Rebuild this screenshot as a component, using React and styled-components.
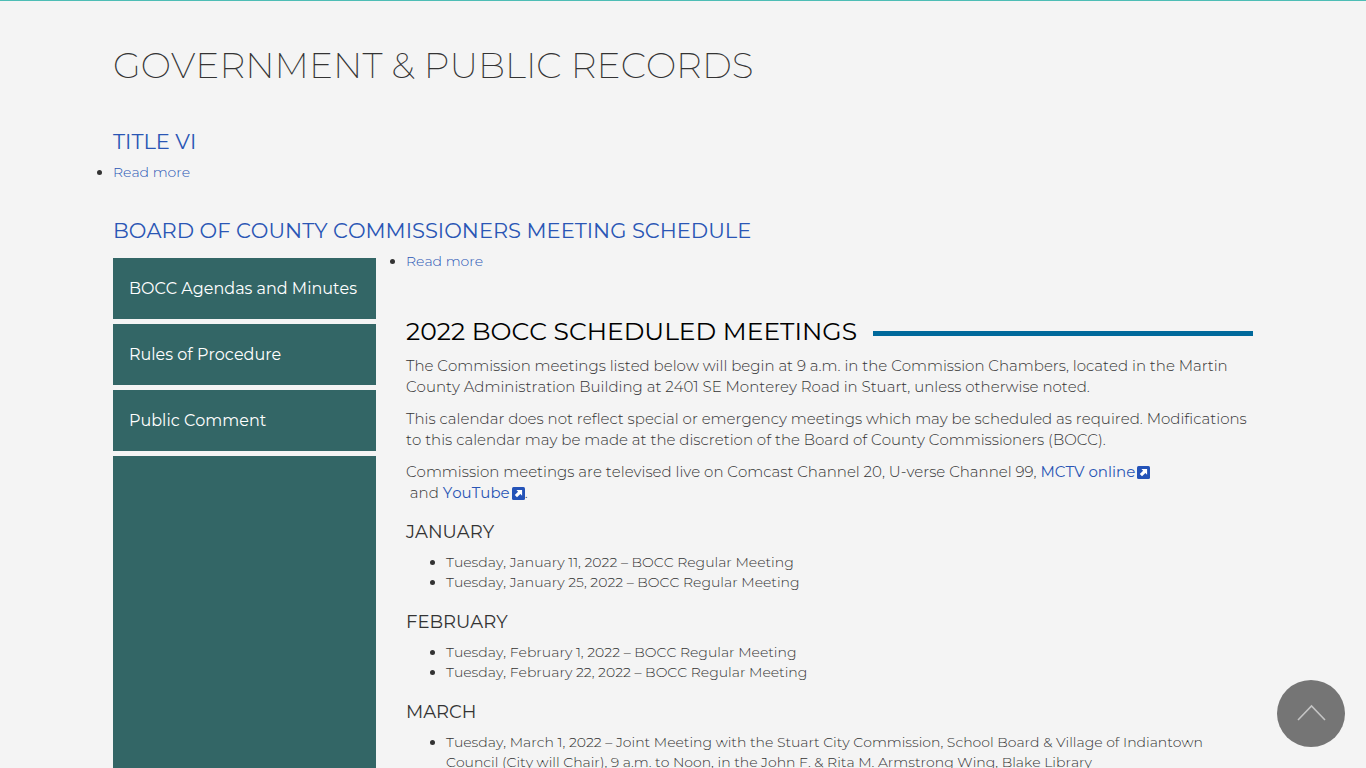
import React from 'react';
import styled, { createGlobalStyle, ThemeProvider } from 'styled-components';

const theme = {
  color: {
    page: '#f4f4f4',
    text: '#333',
    link: '#2a56b5',
    teal: '#336666',
    accent: '#4dbdb5',
    rule: '#00699b',
  },
  font: {
    family: 'Montserrat, Inter, "Open Sans", sans-serif',
  },
};

const GlobalStyle = createGlobalStyle`
  * {
    box-sizing: border-box;
  }

  body {
    margin: 0;
    background: ${theme.color.page};
    color: ${theme.color.text};
    font-family: ${theme.font.family};
    font-size: 14px;
    font-weight: 300;
    font-kerning: none;
    line-height: 20px;
  }
`;

const Page = styled.main`
  border-top: 1px solid ${({ theme }) => theme.color.accent};
`;

const Container = styled.div`
  max-width: 1170px;
  margin: 0 auto;
  padding: 44px 15px 40px;
`;

const PageTitle = styled.h1`
  margin: 0 0 45px;
  font-size: 36px;
  font-weight: 200;
  line-height: 40px;
  text-transform: uppercase;
`;

const SectionTitle = styled.h2`
  margin: 0 0 8px;
  font-size: 21px;
  font-weight: 400;
  line-height: 24px;
  text-transform: uppercase;
`;

const Anchor = styled.a`
  color: ${({ theme }) => theme.color.link};
  font-weight: ${({ $strong }) => ($strong ? 400 : 'inherit')};
  text-decoration: none;
`;

const LinkList = styled.ul`
  margin: 0 0 ${({ $gap }) => $gap}px;
  padding: 0;
`;

const Columns = styled.div`
  display: grid;
  grid-template-columns: minmax(0, 263fr) minmax(0, 847fr);
  column-gap: 30px;
`;

const SideMenu = styled.ul`
  display: flex;
  flex-direction: column;
  gap: 5px;
  margin: 7px 0 0;
  padding: 0;
  list-style: none;
`;

const SideItem = styled.li`
  flex-grow: ${({ $fill }) => ($fill ? 1 : 0)};
  background: ${({ theme }) => theme.color.teal};
`;

const SideLink = styled.a`
  display: block;
  padding: 16px;
  color: #fff;
  font-size: 16px;
  font-weight: 400;
  line-height: 29px;
  text-decoration: none;
`;

const BandTitle = styled.h2`
  display: flex;
  align-items: center;
  gap: 16px;
  margin: 0 0 10px;
  color: #000;
  font-size: 25px;
  font-weight: 400;
  line-height: 28px;
  text-transform: uppercase;

  &::after {
    content: '';
    flex: 1;
    height: 5px;
    margin-top: 4px;
    background: ${({ theme }) => theme.color.rule};
  }
`;

const Paragraph = styled.p`
  margin: 0 0 11px;
  font-size: 15px;
  line-height: 21px;
`;

const MonthTitle = styled.h3`
  margin: 19px 0 10px;
  font-size: 18px;
  font-weight: 400;
  line-height: 20px;
  text-transform: uppercase;
`;

const MeetingList = styled.ul`
  margin: 0 0 20px;
  padding: 0 0 0 40px;
`;

const ExternalSvg = styled.svg`
  width: 13px;
  height: 13px;
  margin-left: 2px;
  vertical-align: -2px;
`;

const TopButton = styled.button`
  position: fixed;
  right: 21px;
  bottom: 21px;
  width: 68px;
  height: 67px;
  padding: 0;
  border: 0;
  border-radius: 50%;
  background: #757575;
  cursor: pointer;

  svg {
    display: block;
    width: 100%;
    height: 100%;
  }
`;

const MENU = ['BOCC Agendas and Minutes', 'Rules of Procedure', 'Public Comment'];

const MONTHS = [
  {
    name: 'January',
    meetings: [
      'Tuesday, January 11, 2022 – BOCC Regular Meeting',
      'Tuesday, January 25, 2022 – BOCC Regular Meeting',
    ],
  },
  {
    name: 'February',
    meetings: [
      'Tuesday, February 1, 2022 – BOCC Regular Meeting',
      'Tuesday, February 22, 2022 – BOCC Regular Meeting',
    ],
  },
  {
    name: 'March',
    meetings: [
      'Tuesday, March 1, 2022 – Joint Meeting with the Stuart City Commission, School Board & Village of Indiantown Council (City will Chair), 9 a.m. to Noon, in the John F. & Rita M. Armstrong Wing, Blake Library',
    ],
  },
];

const ExternalIcon = () => (
  <ExternalSvg viewBox="0 0 13 13" aria-hidden="true">
    <rect width="13" height="13" rx="1.5" fill="#2453b8" />
    <path
      d="M4.4 3h5.7v5.7L8.4 7 5 10.3 2.8 8.1 6.1 4.7z"
      fill="#fff"
    />
  </ExternalSvg>
);

const ExternalLink = ({ href, children }) => (
  <Anchor href={href} $strong>
    {children}
    <ExternalIcon />
  </Anchor>
);

const ReadMore = ({ href, gap }) => (
  <LinkList $gap={gap}>
    <li>
      <Anchor href={href}>Read more</Anchor>
    </li>
  </LinkList>
);

const Month = ({ name, meetings }) => (
  <section>
    <MonthTitle>{name}</MonthTitle>
    <MeetingList>
      {meetings.map(meeting => (
        <li key={meeting}>{meeting}</li>
      ))}
    </MeetingList>
  </section>
);

const App = () => (
  <ThemeProvider theme={theme}>
    <GlobalStyle />
    <Page>
      <Container>
        <PageTitle>Government &amp; Public Records</PageTitle>
        <SectionTitle>
          <Anchor href="#title-vi">Title VI</Anchor>
        </SectionTitle>
        <ReadMore href="#title-vi" gap={37} />
        <SectionTitle>
          <Anchor href="#schedule">
            Board of County Commissioners Meeting Schedule
          </Anchor>
        </SectionTitle>
        <Columns>
          <SideMenu>
            {MENU.map(label => (
              <SideItem key={label}>
                <SideLink href="#menu">{label}</SideLink>
              </SideItem>
            ))}
            <SideItem $fill />
          </SideMenu>
          <div>
            <ReadMore href="#schedule" gap={46} />
            <BandTitle>2022 BOCC Scheduled Meetings</BandTitle>
            <Paragraph>
              The Commission meetings listed below will begin at 9 a.m. in the
              Commission Chambers, located in the Martin County Administration
              Building at 2401 SE Monterey Road in Stuart, unless otherwise
              noted.
            </Paragraph>
            <Paragraph>
              This calendar does not reflect special or emergency meetings which
              may be scheduled as required. Modifications to this calendar may
              be made at the discretion of the Board of County Commissioners
              (BOCC).
            </Paragraph>
            <Paragraph>
              Commission meetings are televised live on Comcast Channel 20,
              U-verse Channel 99,{' '}
              <ExternalLink href="#mctv">MCTV online</ExternalLink>
              <br />
              &nbsp;and <ExternalLink href="#youtube">YouTube</ExternalLink>.
            </Paragraph>
            {MONTHS.map(month => (
              <Month key={month.name} {...month} />
            ))}
          </div>
        </Columns>
      </Container>
    </Page>
    <TopButton type="button" aria-label="Back to top">
      <svg viewBox="0 0 68 67" aria-hidden="true">
        <path
          d="M21 40 34.5 26 48 40"
          fill="none"
          stroke="#c4c4c4"
          strokeWidth="1.6"
        />
      </svg>
    </TopButton>
  </ThemeProvider>
);

export default App;
